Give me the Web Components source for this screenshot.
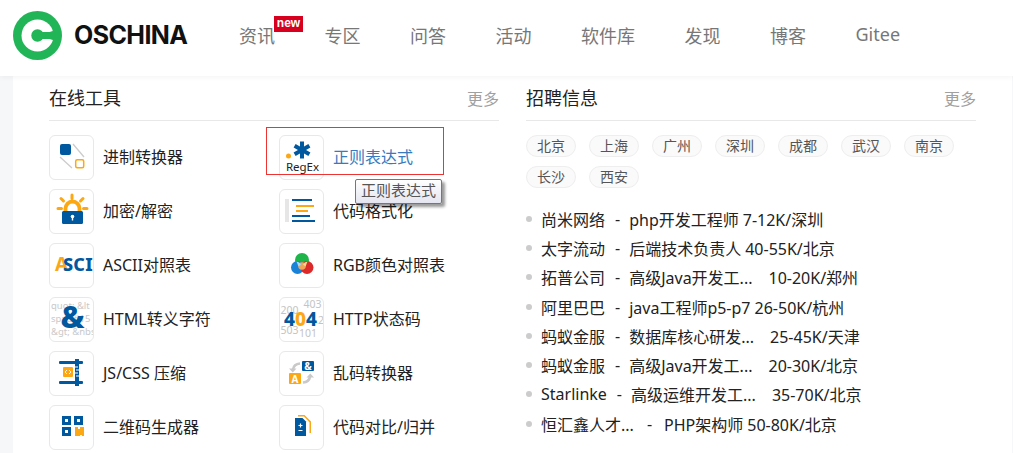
<!DOCTYPE html>
<html lang="zh">
<head>
<meta charset="utf-8">
<title>OSCHINA</title>
<style>
	html, body {
		margin: 0;
		padding: 0;
		height: 453px;
		overflow: hidden;
		background: #f6f7f9;
		font-family: "Noto Sans", "Noto Sans CJK SC", sans-serif;
	}
</style>
</head>
<body>
<site-header></site-header>
<main-panel>
	<tool-list></tool-list>
	<job-list></job-list>
</main-panel>

<script>
const ICONS = {
	convert: `<path d="M24 9 L35 22 M11 22 L23 33" stroke="#ccc" stroke-width="1.3" fill="none"/><rect x="11" y="9" width="11" height="11" rx="2" fill="#00589f"/><rect x="26.7" y="24.7" width="8" height="8" rx="1.5" fill="#fff" stroke="#fca714" stroke-width="1.5"/>`,
	crypt: `<g stroke="#fca714" stroke-width="3" stroke-linecap="round" fill="none"><path d="M23 6v3.500M12 9.500l2.500 2.500M34 9.500l-2.500 2.500M9 19.500h3.500M34.500 19.500h3.500"/><path d="M16.500 23v-3.500a7 7 0 0 1 14 0V23" stroke-width="3.800" stroke-linecap="butt"/></g><rect x="13" y="22" width="21" height="13" rx="1.500" fill="#00589f"/><circle cx="23.500" cy="27.500" r="1.800" fill="#fff"/><rect x="22.800" y="27.500" width="1.400" height="4" fill="#fff"/>`,
	ascii: `<text x="6" y="27.500" font-family="Noto Sans, sans-serif" font-size="19" font-weight="700" fill="#fca714">A</text><text x="14" y="27.500" font-family="Noto Sans, sans-serif" font-size="18" font-weight="800" letter-spacing=".2" fill="#00589f">SCI</text>`,
	regex: `<circle cx="9.500" cy="21" r="2.500" fill="#fca714"/><g stroke="#00589f" stroke-width="4"><path d="M23 6.500v17M15.600 10.700l14.800 8.600M30.400 10.700l-14.800 8.600"/></g><text x="23.500" y="36" text-anchor="middle" font-family="Noto Sans, sans-serif" font-size="11.500" fill="#222">RegEx</text>`,
	format: `<rect x="6" y="10" width="4" height="23" fill="#e6e6e6"/><g fill="#00589f"><rect x="13" y="10" width="20" height="2"/><rect x="13" y="26" width="18" height="2"/><rect x="13" y="31" width="23" height="2"/></g><rect x="17" y="16" width="18" height="2" fill="#fca714"/><rect x="17" y="21" width="12" height="2" fill="#fca714"/>`,
	rgb: `<circle cx="23" cy="17" r="7" fill="#1fb54a"/><circle cx="18.500" cy="24.500" r="6.500" fill="#1a83d8"/><circle cx="28" cy="24.500" r="6.500" fill="#dc2a2a"/><circle cx="23" cy="23" r="3.800" fill="#f0a45a"/><path d="M17.500 18.500a6 6 0 0 1 4.500 3l-2.500 2z" fill="#a9dcf0"/><path d="M28.500 18.500a6 6 0 0 0-4.500 3l2.500 2z" fill="#e8e08a"/>`,
	html: `<g font-family="Noto Sans, sans-serif" font-size="9.500" fill="#c9c9c9"><text x="2" y="12">quot; &amp;lt</text><text x="2" y="25">sp; &amp;#15</text><text x="2" y="38">&amp;gt; &amp;nbsp</text></g><text x="23.500" y="31" text-anchor="middle" font-family="Noto Sans, sans-serif" font-size="31" font-weight="800" fill="#00589f">&amp;</text>`,
	http: `<g font-family="Noto Sans, sans-serif" font-size="10.500" fill="#c4c4c4"><text x="24.500" y="11">403</text><text x="1.500" y="17">200</text><text x="39" y="27">2</text><text x="1.500" y="37">503</text><text x="20" y="40">101</text></g><g font-family="Noto Sans, sans-serif" font-size="19" font-weight="800"><text x="5" y="29" fill="#00589f">4</text><text x="16" y="29" fill="#fca714">0</text><text x="27" y="29" fill="#00589f">4</text></g>`,
	compress: `<g fill="#00589f"><rect x="10" y="10" width="24" height="3" rx="1"/><rect x="10" y="30" width="24" height="3" rx="1"/><rect x="26" y="8" width="4" height="27"/></g><rect x="14" y="16" width="10" height="10" rx="1" fill="#fca714"/><path d="M18 19l-2 2 2 2M20 19l2 2-2 2" stroke="#fff" fill="none" stroke-width=".9"/><path d="M26 16h3M27 19h3M26 22h3M27 25h3" stroke="#fff" stroke-width="1"/>`,
	garble: `<rect x="23" y="10" width="12" height="10" rx="1" fill="#00589f"/><text x="29" y="18.700" text-anchor="middle" font-family="Noto Sans, sans-serif" font-size="10" font-weight="700" fill="#fff">&amp;</text><rect x="10" y="22" width="12" height="11" rx="1" fill="#fca714"/><text x="16" y="31.500" text-anchor="middle" font-family="Noto Sans, sans-serif" font-size="10" font-weight="700" fill="#fff">A</text><g fill="none" stroke="#c9c9c9" stroke-width="2.600"><path d="M21 12.500c-4 .3-6.500 2.500-7 6"/><path d="M24 31.500c4-.3 6.500-2.500 7-6"/></g><path d="M10 17.500h7.500l-3.700 4z" fill="#c9c9c9"/><path d="M27.500 26.500h7.500l-3.700-4z" fill="#c9c9c9"/>`,
	qrcode: `<g fill="none" stroke="#00589f" stroke-width="3"><rect x="14.500" y="12.500" width="6" height="6"/><rect x="26.500" y="12.500" width="6" height="6"/><rect x="14.500" y="23.500" width="6" height="6"/></g><path d="M26 22h3v2h2v-2h4v9h-2v-1h-2v1h-5z" fill="#fca714"/>`,
	diff: `<path d="M19 10h6.500l6.500 6.500V28h-1.500V17.200L25 11.500h-6z" fill="#fca714"/><path d="M16 13h7.500l3.500 3.500V31H16z" fill="#00589f"/><path d="M19.500 20.500h4M21.500 18.500v4M19.500 25.500h4" stroke="#fff" stroke-width="1.200"/>`
};

class SiteHeader extends HTMLElement {
	constructor() {
		super();
		this._shadowDOM = this.attachShadow({mode: "open"});
		this.render();
	}

	render() {
		const nav = ["资讯", "专区", "问答", "活动", "软件库", "发现", "博客", "Gitee"];
		this._shadowDOM.innerHTML = `
		<style>
			:host {
				display: flex;
				align-items: center;
				height: 76px;
				padding-left: 13px;
				background: #fff;
				box-shadow: 0 1px 6px rgba(0, 0, 0, .05);
				position: relative;
				z-index: 2;
				box-sizing: border-box;
			}
			svg {
				width: 49px;
				height: 49px;
				flex: none;
				margin-top: -5px;
			}
			.brand {
				margin: -5px 0 0 12px;
				width: 114px;
				font: 700 25px/1 Inter, sans-serif;
				letter-spacing: -.6px;
				color: #111;
				white-space: nowrap;
			}
			nav {
				display: flex;
				gap: 49.5px;
				margin: -7px 0 0 51px;
				font-size: 18px;
				color: #777;
			}
			a {
				position: relative;
			}
			.new {
				position: absolute;
				left: 35px;
				top: -6px;
				width: 29px;
				height: 16px;
				background: #d8001f;
				color: #fff;
				font: 700 12px/15px "Liberation Sans", sans-serif;
				text-align: center;
			}
		</style>
		<svg viewBox="0 0 49 49">
			<circle cx="24.5" cy="24.5" r="24.5" fill="#22b557"/>
			<circle cx="24.5" cy="24.5" r="16" fill="#fff"/>
			<circle cx="24.5" cy="24.5" r="6.2" fill="#22b557"/>
			<path d="M24.5 21h12l5 -1.500v10l-5 -1.500h-12z" fill="#22b557"/>
		</svg>
		<div class="brand">OSCHINA</div>
		<nav>${nav.map((n, i) => `<a>${n}${i === 0 ? '<span class="new">new</span>' : ""}</a>`).join("")}</nav>`;
	}
}

class MainPanel extends HTMLElement {
	constructor() {
		super();
		this.attachShadow({mode: "open"}).innerHTML = `
		<style>
			:host {
				display: grid;
				grid-template-columns: 450px 450px;
				column-gap: 27px;
				margin: 0 1px 0 13px;
				padding: 0 0 0 36px;
				height: 377px;
				background: #fff;
				overflow: hidden;
			}
		</style>
		<slot></slot>`;
	}
}

class SectionHead extends HTMLElement {
	constructor() {
		super();
		this.attachShadow({mode: "open"}).innerHTML = `
		<style>
			:host {
				display: flex;
				justify-content: space-between;
				align-items: center;
				height: 44px;
				border-bottom: 1px solid #e8e8e8;
			}
			h3 {
				margin: 0 0 2px;
				font-size: 18px;
				font-weight: 400;
				color: #222;
			}
			span {
				font-size: 16px;
				color: #a0a0a0;
			}
		</style>
		<h3>${this.getAttribute("title")}</h3>
		<span>更多</span>`;
	}
}

class ToolItem extends HTMLElement {
	constructor() {
		super();
		this.attachShadow({mode: "open"}).innerHTML = `
		<style>
			:host {
				display: flex;
				align-items: center;
				gap: 9px;
				height: 45px;
				font-size: 16px;
				color: #222;
			}
			:host([active]) {
				color: #3979bd;
			}
			.icon {
				width: 43px;
				height: 43px;
				flex: none;
				border: 1px solid #e8e8e8;
				border-radius: 6px;
				overflow: hidden;
				background: #fff;
			}
			svg {
				display: block;
				width: 43px;
				height: 43px;
			}
			.txt {
				white-space: nowrap;
				padding-bottom: 4px;
			}
		</style>
		<div class="icon"><svg viewBox="1 1 43 43">${ICONS[this.getAttribute("icon")]}</svg></div>
		<span class="txt"><slot></slot></span>`;
	}
}

class ToolList extends HTMLElement {
	constructor() {
		super();
		const tools = [
			["convert", "进制转换器"], ["regex", "正则表达式"],
			["crypt", "加密/解密"], ["format", "代码格式化"],
			["ascii", "ASCII对照表"], ["rgb", "RGB颜色对照表"],
			["html", "HTML转义字符"], ["http", "HTTP状态码"],
			["compress", "JS/CSS 压缩"], ["garble", "乱码转换器"],
			["qrcode", "二维码生成器"], ["diff", "代码对比/归并"]
		];
		this.attachShadow({mode: "open"}).innerHTML = `
		<style>
			:host {
				display: block;
				position: relative;
			}
			.grid {
				display: grid;
				grid-template-columns: 230px 220px;
				row-gap: 9px;
				padding-top: 14px;
			}
			.focus {
				position: absolute;
				left: 217px;
				top: 51px;
				width: 176px;
				height: 46px;
				border: 1px solid #ee3333;
			}
			.tip {
				position: absolute;
				left: 306px;
				top: 103px;
				padding: 0 5px 2px;
				height: 21px;
				line-height: 21px;
				font-size: 15px;
				color: #555;
				white-space: nowrap;
				border: 1px solid #767676;
				border-radius: 2px;
				background: linear-gradient(#fff, #e4e5f0);
				box-shadow: 3px 3px 3px rgba(0, 0, 0, .4);
			}
		</style>
		<section-head title="在线工具"></section-head>
		<div class="grid">
			${tools.map(t => `<tool-item icon="${t[0]}"${t[0] === "regex" ? " active" : ""}>${t[1]}</tool-item>`).join("")}
		</div>
		<div class="focus"></div>
		<div class="tip">正则表达式</div>`;
	}
}

class JobRow extends HTMLElement {
	constructor() {
		super();
		const wide = this.hasAttribute("cut");
		const longName = this.getAttribute("company").endsWith("...");
		this.attachShadow({mode: "open"}).innerHTML = `
		<style>
			:host {
				display: flex;
				align-items: center;
				height: 29.3px;
				font-size: 16px;
				color: #222;
				white-space: pre;
			}
			i {
				width: 6px;
				height: 6px;
				margin-right: 9px;
				border-radius: 50%;
				background: #ccc;
				flex: none;
			}
			.dash {
				margin: 0 ${longName ? "12px 0 13px" : "9px 0 10px"};
			}
			.pay {
				margin-left: ${wide ? 16 : 4}px;
			}
		</style>
		<i></i><span>${this.getAttribute("company")}</span><span class="dash">-</span><span>${this.getAttribute("job")}</span><span class="pay">${this.getAttribute("pay")}</span>`;
	}
}

class JobList extends HTMLElement {
	constructor() {
		super();
		const cities = ["北京", "上海", "广州", "深圳", "成都", "武汉", "南京", "长沙", "西安"];
		const jobs = [
			["尚米网络", "php开发工程师", "7-12K/深圳"],
			["太字流动", "后端技术负责人", "40-55K/北京"],
			["拓普公司", "高级Java开发工...", "10-20K/郑州", 1],
			["阿里巴巴", "java工程师p5-p7", "26-50K/杭州"],
			["蚂蚁金服", "数据库核心研发...", "25-45K/天津", 1],
			["蚂蚁金服", "高级Java开发工...", "20-30K/北京", 1],
			["Starlinke", "高级运维开发工...", "35-70K/北京", 1],
			["恒汇鑫人才...", "PHP架构师", "50-80K/北京"]
		];
		this.attachShadow({mode: "open"}).innerHTML = `
		<style>
			:host {
				display: block;
			}
			.tags {
				display: flex;
				flex-wrap: wrap;
				gap: 9px 13px;
				margin-top: 14px;
				width: 450px;
			}
			.tags span {
				width: 48px;
				height: 20px;
				line-height: 19px;
				text-align: center;
				font-size: 14px;
				color: #555;
				background: #fafafa;
				border: 1px solid #eee;
				border-radius: 11px;
			}
			.rows {
				margin-top: 16px;
			}
		</style>
		<section-head title="招聘信息"></section-head>
		<div class="tags">${cities.map(c => `<span>${c}</span>`).join("")}</div>
		<div class="rows">
			${jobs.map(j => `<job-row company="${j[0]}" job="${j[1]}" pay="${j[2]}"${j[3] ? " cut" : ""}></job-row>`).join("")}
		</div>`;
	}
}

customElements.define("site-header", SiteHeader);
customElements.define("main-panel", MainPanel);
customElements.define("section-head", SectionHead);
customElements.define("tool-item", ToolItem);
customElements.define("tool-list", ToolList);
customElements.define("job-row", JobRow);
customElements.define("job-list", JobList);
</script>
</body>
</html>
